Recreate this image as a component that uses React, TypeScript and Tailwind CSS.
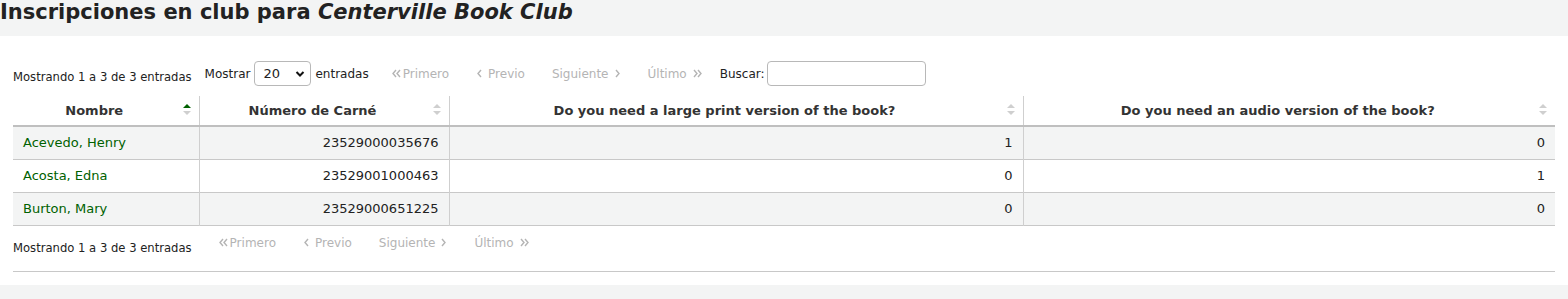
import React from "react";

const rows = [
  { name: "Acevedo, Henry", card: "23529000035676", lp: "1", au: "0" },
  { name: "Acosta, Edna", card: "23529001000463", lp: "0", au: "1" },
  { name: "Burton, Mary", card: "23529000651225", lp: "0", au: "0" },
];

function SortIcon({ active }: { active?: boolean }) {
  return (
    <svg width="8" height="12" viewBox="0 0 8 12" className="absolute right-[8px] top-[8px]">
      <polygon points="4,0 8,4 0,4" fill={active ? "#006100" : "#cfcfcf"} />
      <polygon points="0,7 8,7 4,11" fill="#cfcfcf" />
    </svg>
  );
}

function ChevL() {
  return (
    <svg width="7" height="9" viewBox="0 0 7 9" className="inline-block">
      <polyline points="5,1 2,4.5 5,8" fill="none" stroke="#b4b4b4" strokeWidth="1.4" />
    </svg>
  );
}
function ChevR() {
  return (
    <svg width="7" height="9" viewBox="0 0 7 9" className="inline-block">
      <polyline points="2,1 5,4.5 2,8" fill="none" stroke="#b4b4b4" strokeWidth="1.4" />
    </svg>
  );
}
function ChevLL() {
  return (
    <svg width="11" height="9" viewBox="0 0 11 9" className="inline-block">
      <polyline points="5,1 2,4.5 5,8" fill="none" stroke="#b4b4b4" strokeWidth="1.4" />
      <polyline points="9,1 6,4.5 9,8" fill="none" stroke="#b4b4b4" strokeWidth="1.4" />
    </svg>
  );
}
function ChevRR() {
  return (
    <svg width="11" height="9" viewBox="0 0 11 9" className="inline-block">
      <polyline points="2,1 5,4.5 2,8" fill="none" stroke="#b4b4b4" strokeWidth="1.4" />
      <polyline points="6,1 9,4.5 6,8" fill="none" stroke="#b4b4b4" strokeWidth="1.4" />
    </svg>
  );
}

function Pager() {
  return (
    <div className="flex items-center gap-[27px] text-[12px] leading-[14px] text-[#b4b4b4]">
      <span className="flex items-center gap-[1px]"><ChevLL />Primero</span>
      <span className="flex items-center gap-[5px]"><ChevL />Previo</span>
      <span className="flex items-center gap-[5px]">Siguiente<ChevR /></span>
      <span className="flex items-center gap-[5px]">Último<ChevRR /></span>
    </div>
  );
}

export default function App() {
  return (
    <div className="w-[1568px] h-[299px] bg-[#f3f4f4] text-[#222] overflow-hidden" style={{ fontFamily: "'DejaVu Sans', sans-serif" }}>
      <div className="h-[36px]">
        <h1 className="text-[21px] leading-[24px] font-bold text-[#222] whitespace-nowrap">
          Inscripciones en club para <em className="italic">Centerville Book Club</em>
        </h1>
      </div>
      <div className="bg-white h-[249px] px-[13px] pt-[25px]">
        <div className="flex items-start h-[25px] text-[12px]">
          <div className="pt-[9px] leading-[14px] text-[11.6px]">Mostrando 1 a 3 de 3 entradas</div>
          <div className="flex items-center ml-[13px] h-[25px]">
            <span>Mostrar</span>
            <div className="ml-[4px] w-[57px] h-[25px] border border-[#b8b8b8] rounded-[4px] flex items-center justify-between pl-[8px] pr-[5px] text-[13px]">
              <span>20</span>
              <svg width="10" height="8" viewBox="0 0 10 8">
                <polyline points="1.5,2 5,5.5 8.5,2" fill="none" stroke="#111" strokeWidth="2" />
              </svg>
            </div>
            <span className="ml-[4px]">entradas</span>
          </div>
          <div className="ml-[22px] h-[25px] flex items-center">
            <Pager />
          </div>
          <div className="ml-[17px] flex items-center h-[25px]">
            <span>Buscar:</span>
            <div className="ml-[2px] w-[159px] h-[25px] border border-[#b8b8b8] rounded-[4px]" />
          </div>
        </div>

        <table className="mt-[10px] w-[1542px] table-fixed border-collapse text-[13px]">
          <colgroup>
            <col className="w-[186px]" />
            <col className="w-[250px]" />
            <col className="w-[574px]" />
            <col className="w-[532px]" />
          </colgroup>
          <thead>
            <tr className="h-[30px] border-b-2 border-[#bfbfbf]">
              <th className="relative pl-[10px] pr-[33px] text-[13px] font-bold text-[#333] text-center">Nombre<SortIcon active /></th>
              <th className="relative pl-[10px] pr-[33px] text-[13px] font-bold text-[#333] text-center border-l border-[#cfcfcf]">Número de Carné<SortIcon /></th>
              <th className="relative pl-[10px] pr-[33px] text-[13px] font-bold text-[#333] text-center border-l border-[#cfcfcf]">Do you need a large print version of the book?<SortIcon /></th>
              <th className="relative pl-[10px] pr-[33px] text-[13px] font-bold text-[#333] text-center border-l border-[#cfcfcf]">Do you need an audio version of the book?<SortIcon /></th>
            </tr>
          </thead>
          <tbody>
            {rows.map((r, i) => (
              <tr key={r.name} className={`h-[33px] border-b border-[#c8c8c8] ${i % 2 === 0 ? "bg-[#f3f4f4]" : "bg-white"}`}>
                <td className="pl-[10px] text-[#006100]">{r.name}</td>
                <td className="pr-[10px] text-right text-[#222] border-l border-[#cfcfcf]">{r.card}</td>
                <td className="pr-[10px] text-right text-[#222] border-l border-[#cfcfcf]">{r.lp}</td>
                <td className="pr-[10px] text-right text-[#222] border-l border-[#cfcfcf]">{r.au}</td>
              </tr>
            ))}
          </tbody>
        </table>

        <div className="flex items-start h-[46px] border-b border-[#c8c8c8] text-[12px]">
          <div className="pt-[15px] leading-[14px] text-[11.6px]">Mostrando 1 a 3 de 3 entradas</div>
          <div className="ml-[26px] pt-[10px]">
            <Pager />
          </div>
        </div>
      </div>
    </div>
  );
}
